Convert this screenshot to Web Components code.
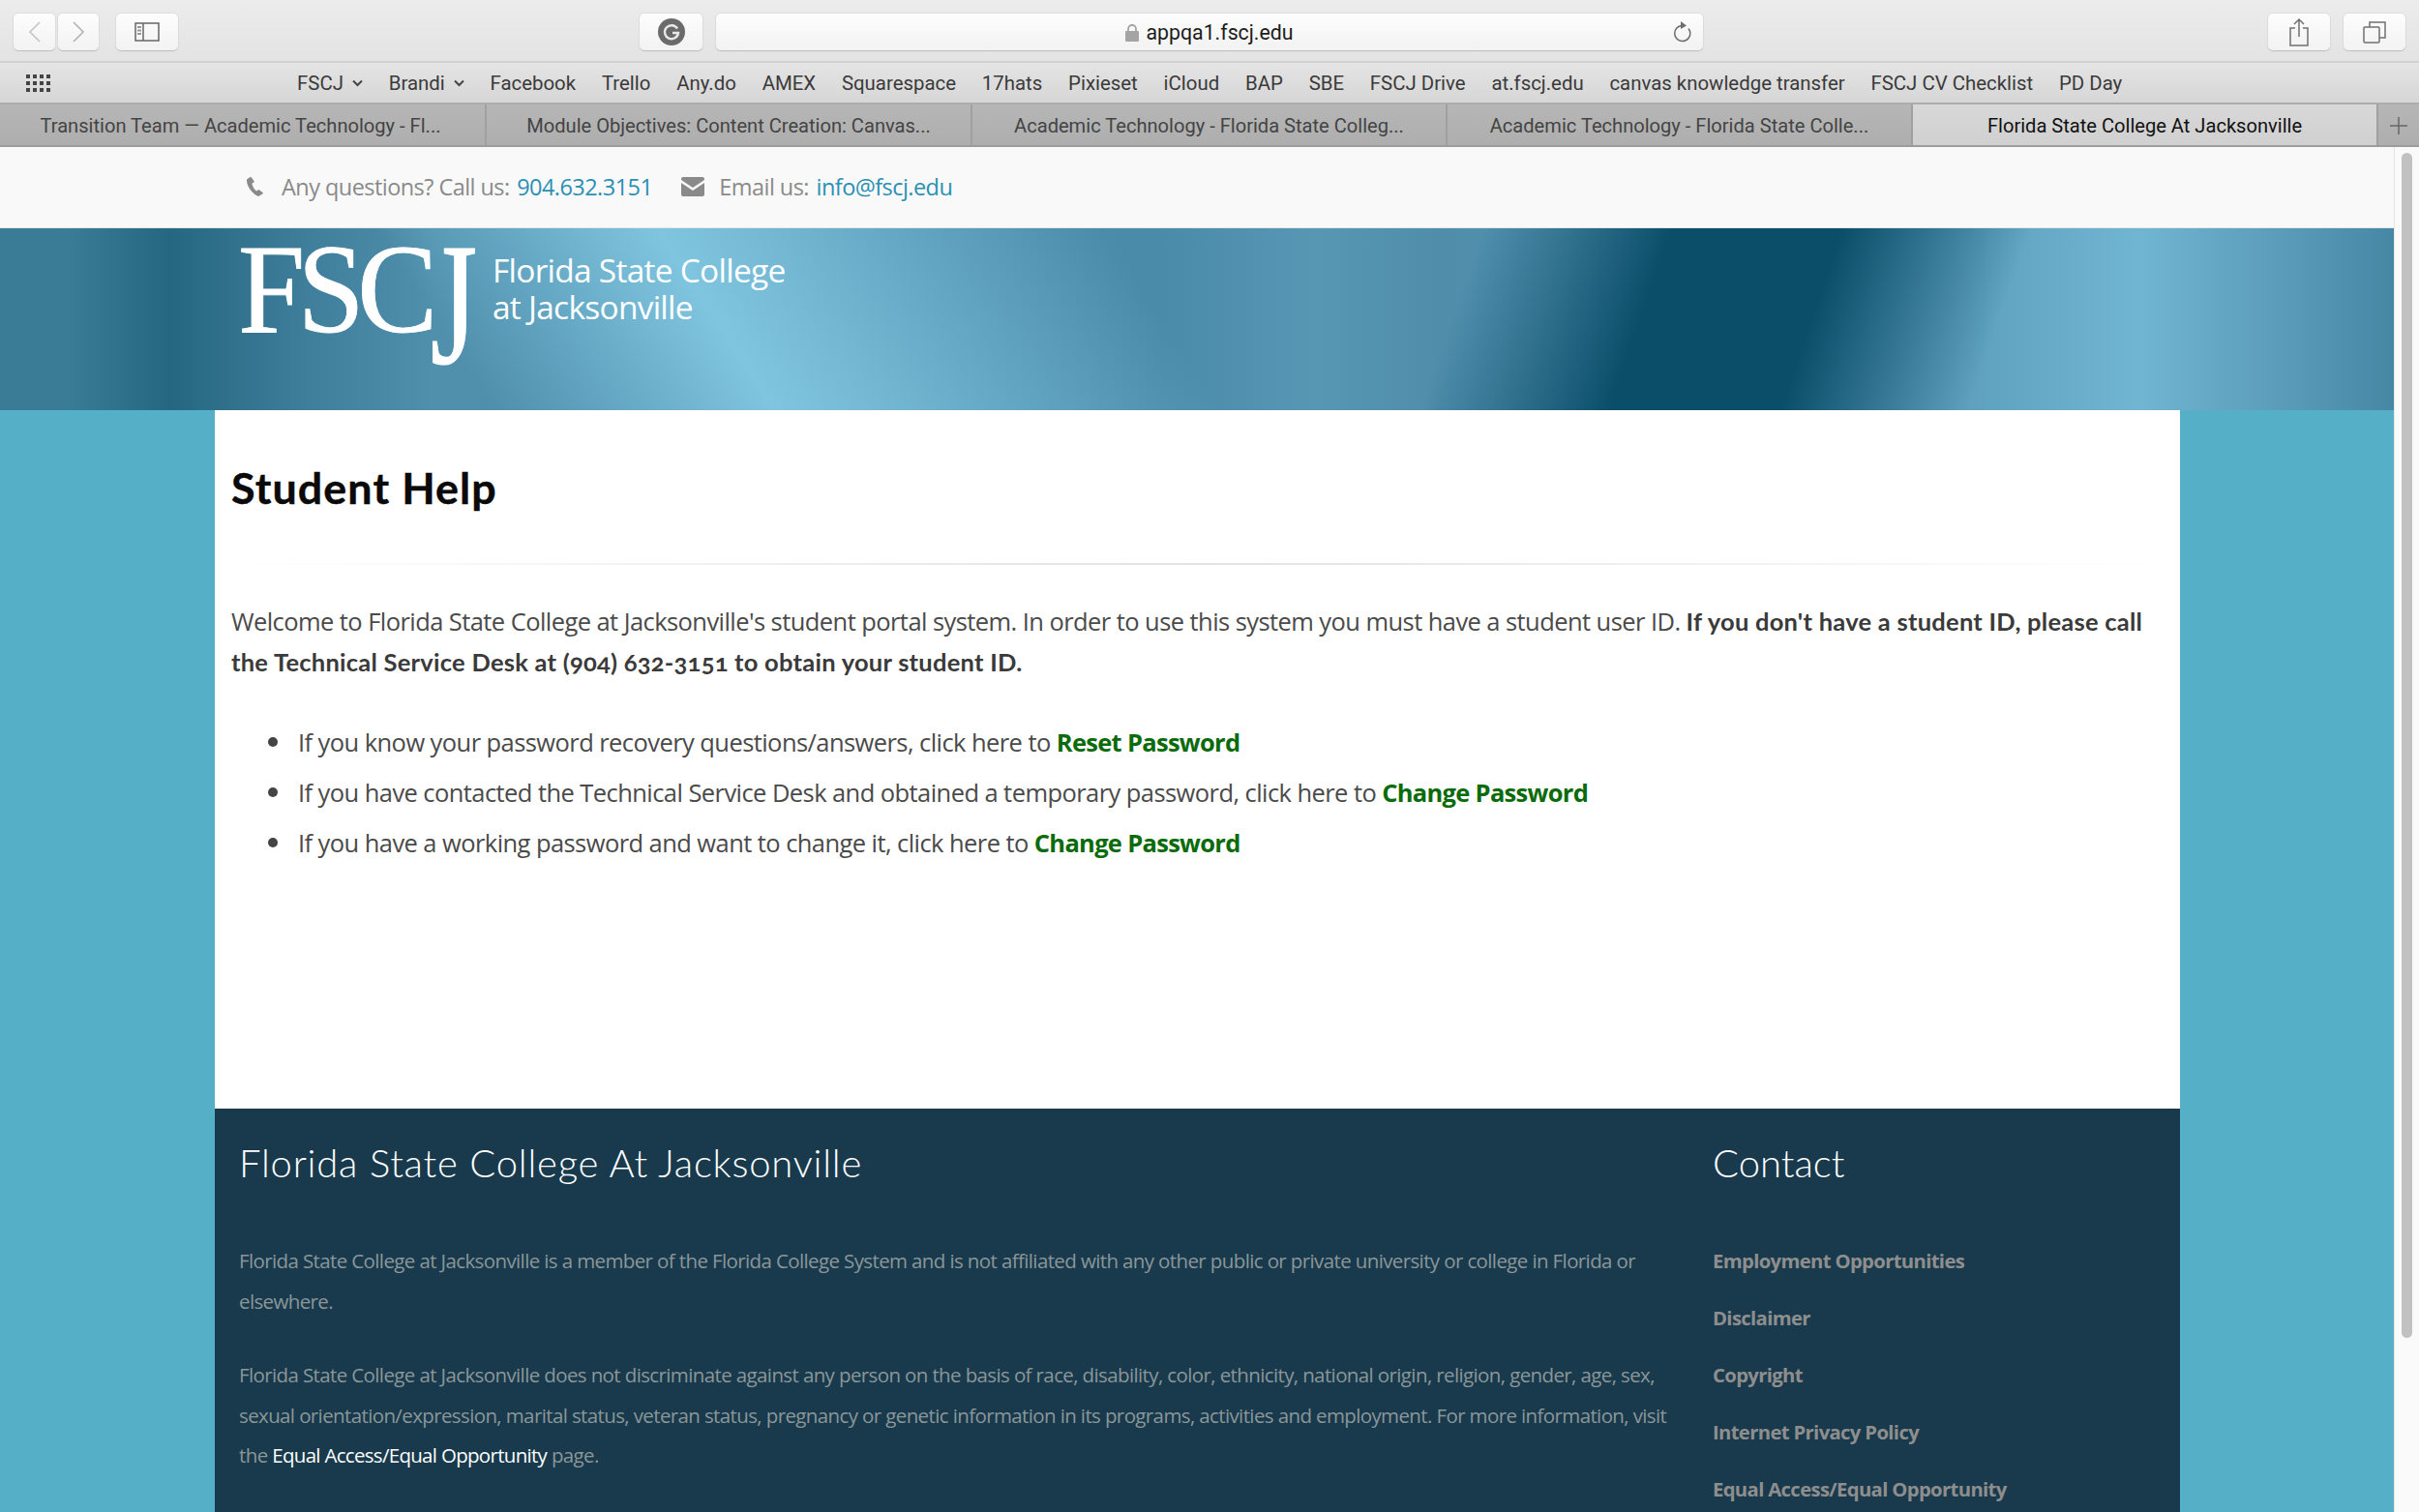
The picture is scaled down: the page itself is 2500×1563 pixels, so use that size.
<!DOCTYPE html>
<html lang="en">
<head>
<meta charset="utf-8">
<title>Student Help</title>
<style>
  html, body { margin: 0; height: 100%; overflow: hidden; background: #fafafa; }
  body { display: flex; flex-direction: column; font-family: "Open Sans", sans-serif; }
  .page { flex: 1; min-height: 0; display: flex; }
  .scroller { flex: 1; min-width: 0; display: flex; flex-direction: column; background: #54afc7; overflow: hidden; }
</style>
</head>
<body>
  <browser-toolbar url="appqa1.fscj.edu"></browser-toolbar>
  <bookmarks-bar></bookmarks-bar>
  <tab-strip></tab-strip>
  <div class="page">
    <div class="scroller">
      <site-topbar></site-topbar>
      <site-banner></site-banner>
      <help-content></help-content>
      <site-footer></site-footer>
    </div>
    <scroll-track></scroll-track>
  </div>

<script>
/**
 * Small base class: each element passes its markup and gets an open shadow root.
 */
class ShadowElement extends HTMLElement {
  constructor(html) {
    super();
    this.attachShadow({ mode: 'open' });
    const template = document.createElement('template');
    template.innerHTML = html;
    this.shadowRoot.appendChild(template.content.cloneNode(true));
  }
}

class BrowserToolbar extends ShadowElement {
  constructor() {
    super(`
      <style>
        :host {
          display: flex;
          align-items: flex-start;
          height: 65px;
          box-sizing: border-box;
          padding-top: 14px;
          background: linear-gradient(#ececec, #e3e3e3);
          border-bottom: 2px solid #d2d2d2;
        }
        .btn {
          height: 38px;
          box-sizing: border-box;
          display: flex;
          align-items: center;
          justify-content: center;
          background: linear-gradient(#fdfdfd, #f2f2f2);
          border-radius: 5px;
          box-shadow: 0 1px 1px #bdbdbd, 0 0 0 1px #dedede;
          flex-shrink: 0;
        }
        svg { display: block; fill: none; stroke: #7a7a7a; stroke-width: 1.5; }
        .url {
          width: 1020px;
          margin-left: 14px;
          position: relative;
          font: 21.300px Roboto, sans-serif;
          color: #1c1c1c;
          gap: 7px;
          padding-top: 1px;
        }
        .reload { position: absolute; right: 12px; top: 6px; }
      </style>
      <div class="btn" style="width:43px;margin-left:14px">
        <svg width="14" height="24" viewBox="0 0 14 24" style="stroke:#c2c2c2"><path d="M12 2 2 12l10 10"/></svg>
      </div>
      <div class="btn" style="width:42px;margin-left:3px">
        <svg width="14" height="24" viewBox="0 0 14 24" style="stroke:#b0b0b0"><path d="M2 2l10 10L2 22"/></svg>
      </div>
      <div class="btn" style="width:64px;margin-left:18px">
        <svg width="26" height="20" viewBox="0 0 26 20"><rect x="1" y="1" width="24" height="18" stroke="#666"/><path d="M9 1v18" stroke="#666"/><path d="M3 5h4M3 8.500h4M3 12h4" stroke="#999" stroke-width="2"/></svg>
      </div>
      <div class="btn" style="width:65px;margin-left:477px">
        <svg width="28" height="28" viewBox="0 0 28 28"><circle cx="14" cy="14" r="14" fill="#6b6b6b" stroke="none"/><path d="M20 10.500A7 7 0 1 0 21 15h-6" stroke="#e8e8e8" stroke-width="2.400"/></svg>
      </div>
      <div class="btn url">
        <svg width="14" height="18" viewBox="0 0 14 18" style="stroke:none"><rect x="0" y="7" width="14" height="11" rx="1" fill="#a4a4a4"/><path d="M3 8V5a4 4 0 0 1 8 0v3" stroke="#a4a4a4" stroke-width="1.800"/></svg>
        <span id="url"></span>
        <svg class="reload" width="22" height="26" viewBox="0 0 22 26"><path d="M13 6.500a8 8 0 1 0 6 3" stroke="#6e6e6e"/><path d="M11 2l6 4.500-6 3.500z" fill="#6e6e6e" stroke="none"/></svg>
      </div>
      <div class="btn" style="width:64px;margin-left:584px">
        <svg width="22" height="30" viewBox="0 0 22 30"><path d="M7 11H2v18h18V11h-5M11 20V2M6 7l5-5 5 5" stroke="#707070"/></svg>
      </div>
      <div class="btn" style="width:64px;margin-left:14px">
        <svg width="24" height="24" viewBox="0 0 24 24"><rect x="1" y="7" width="16" height="16" rx="1" stroke="#707070"/><path d="M7 7V2h16v16h-6" stroke="#707070"/></svg>
      </div>
    `);
  }

  connectedCallback() {
    this.shadowRoot.getElementById('url').textContent = this.getAttribute('url');
  }
}

class BookmarksBar extends ShadowElement {
  constructor() {
    super(`
      <style>
        :host {
          display: flex;
          align-items: center;
          height: 43px;
          box-sizing: border-box;
          padding-top: 1px;
          background: linear-gradient(#e4e4e4, #d6d6d6);
          border-bottom: 2px solid #acacac;
          font: 20.400px Roboto, sans-serif;
          color: #3a3a3a;
          white-space: nowrap;
        }
        .grid { display: block; margin-left: 27px; margin-right: 255px; fill: #444; }
        span { margin-right: 26.800px; display: inline-flex; align-items: center; gap: 9px; }
        span svg { fill: none; stroke: #444; stroke-width: 2; }
      </style>
      <svg class="grid" width="25" height="18" viewBox="0 0 25 18">
        <rect x="0" y="0" width="4" height="4"/><rect x="7" y="0" width="4" height="4"/><rect x="14" y="0" width="4" height="4"/><rect x="21" y="0" width="4" height="4"/>
        <rect x="0" y="7" width="4" height="4"/><rect x="7" y="7" width="4" height="4"/><rect x="14" y="7" width="4" height="4"/><rect x="21" y="7" width="4" height="4"/>
        <rect x="0" y="14" width="4" height="4"/><rect x="7" y="14" width="4" height="4"/><rect x="14" y="14" width="4" height="4"/><rect x="21" y="14" width="4" height="4"/>
      </svg>
      <span>FSCJ <svg width="11" height="8" viewBox="0 0 11 8"><path d="M1 1.500l4.500 4.500L10 1.500"/></svg></span>
      <span>Brandi <svg width="11" height="8" viewBox="0 0 11 8"><path d="M1 1.500l4.500 4.500L10 1.500"/></svg></span>
      <span>Facebook</span><span>Trello</span><span>Any.do</span><span>AMEX</span>
      <span>Squarespace</span><span>17hats</span><span>Pixieset</span><span>iCloud</span>
      <span>BAP</span><span>SBE</span><span>FSCJ Drive</span><span>at.fscj.edu</span>
      <span>canvas knowledge transfer</span><span>FSCJ CV Checklist</span><span>PD Day</span>
    `);
  }
}

class TabStrip extends ShadowElement {
  constructor() {
    super(`
      <style>
        :host {
          display: flex;
          height: 44px;
          box-sizing: border-box;
          background: linear-gradient(#b6b6b6, #aeaeae);
          border-bottom: 2px solid #9c9c9c;
          font: 20.100px Roboto, sans-serif;
          color: #444;
          white-space: nowrap;
        }
        div {
          display: flex;
          align-items: center;
          justify-content: center;
          box-sizing: border-box;
          padding-top: 2px;
          border-right: 2px solid #a0a0a0;
        }
        .active { background: linear-gradient(#d8d8d8, #d0d0d0); color: #111; }
        .plus { flex: 1; border-right: 0; }
        svg { stroke: #666; stroke-width: 1.500; }
      </style>
      <div style="width:503px;padding-right:4px">Transition Team \u2014 Academic Technology - Fl...</div>
      <div style="width:502px">Module Objectives: Content Creation: Canvas...</div>
      <div style="width:491px">Academic Technology - Florida State Colleg...</div>
      <div style="width:481px">Academic Technology - Florida State Colle...</div>
      <div style="width:481px" class="active">Florida State College At Jacksonville</div>
      <div class="plus"><svg width="20" height="20" viewBox="0 0 20 20"><path d="M10 1v18M1 10h18"/></svg></div>
    `);
  }
}

class SiteTopbar extends ShadowElement {
  constructor() {
    super(`
      <style>
        :host {
          display: flex;
          align-items: center;
          height: 84px;
          flex-shrink: 0;
          box-sizing: border-box;
          padding: 0 0 2px 255px;
          background: #f9f9f9;
          border-bottom: 1px solid #e4e4e4;
          font: 23.500px "Open Sans", sans-serif;
          letter-spacing: -.55px;
          color: #8a8a8a;
          white-space: nowrap;
        }
        a { color: #2a90b4; text-decoration: none; }
        svg { fill: #8a8a8a; flex-shrink: 0; }
        .phone { margin-right: 18px; }
        .mail { margin: 0 15px 0 30px; }
        .txt a { margin-left: 2px; }
      </style>
      <svg class="phone" width="18" height="20" viewBox="0 0 18 20"><path d="M3.500 0 0 2.500C-.5 8 4.500 17 12 20l5-3-.5-1-4-3-2.500 1.500C8 13 5.500 9 5.500 6.500L8 5 5 .5z"/></svg>
      <span class="txt">Any questions? Call us: <a>904.632.3151</a></span>
      <svg class="mail" width="24" height="20" viewBox="0 0 24 20"><path d="M2 0h20a2 2 0 0 1 2 2v1L12 11 0 3V2a2 2 0 0 1 2-2zM0 6l12 8 12-8v12a2 2 0 0 1-2 2H2a2 2 0 0 1-2-2z"/></svg>
      <span class="txt">Email us: <a>info@fscj.edu</a></span>
    `);
  }
}

class SiteBanner extends ShadowElement {
  constructor() {
    super(`
      <style>
        :host {
          display: flex;
          height: 188px;
          flex-shrink: 0;
          box-sizing: border-box;
          padding: 0 0 0 246px;
          color: #fff;
          background:
            linear-gradient(57deg, rgba(128,197,224,0) 429px, #80c5e0 672px, rgba(128,197,224,0) 1058px),
            linear-gradient(109deg, rgba(11,78,106,0) 1449px, #0b4e6a 1634px, #0b4e6a 1800px, rgba(11,78,106,0) 1985px),
            linear-gradient(90deg, #3a7b96 0, #3a7b96 70px, #256680 176px, #3f7f9c 320px, #5090ad 450px, #4a8baa 1200px, #5897b4 1360px, #4f8dab 1490px, #5ea0bd 2030px, #70b5d2 2210px, #5d9fbd 2340px, #4687a4 2474px);
        }
        .mark {
          font: 131px/1 "Liberation Serif", serif;
          -webkit-text-stroke: .8px #fff;
          letter-spacing: -8px;
          margin-top: -3px;
          height: 131px;
          transform: scaleX(.95);
          transform-origin: left top;
          white-space: nowrap;
          width: 263px;
        }
        .mark span { display: inline-block; transform: scaleY(1.38); transform-origin: 50% 20%; }
        .name {
          font: 33.500px/38px "Open Sans", sans-serif;
          letter-spacing: -.75px;
          margin-top: 24px;
          white-space: nowrap;
        }
      </style>
      <div class="mark">FSC<span>J</span></div>
      <div class="name">Florida State College<br>at Jacksonville</div>
    `);
  }
}

class HelpContent extends ShadowElement {
  constructor() {
    super(`
      <style>
        :host {
          display: block;
          width: 2031px;
          height: 722px;
          flex-shrink: 0;
          box-sizing: border-box;
          margin-left: 222px;
          padding: 50px 17px 0;
          background: #fff;
          font: 25.500px/42px "Open Sans", sans-serif;
          letter-spacing: -.57px;
          color: #4a4a4a;
        }
        h1 {
          margin: 0;
          font: 700 44.800px/60px Lato, sans-serif;
          -webkit-text-stroke: .4px #0a0a0a;
          letter-spacing: 1.1px;
          color: #0a0a0a;
        }
        hr {
          height: 2px;
          border: 0;
          margin: 48px 0 37px;
          background: linear-gradient(90deg, transparent, #e2e2e2 50%, transparent);
        }
        p { margin: 0; }
        b { font: 700 25.500px/42px Lato, sans-serif; letter-spacing: .25px; color: #3a3a3a; font-variant-numeric: oldstyle-nums; }
        ul { list-style: none; margin: 41px 0 0; padding: 0 0 0 38px; }
        li { display: flex; margin-bottom: 10.100px; }
        li::before {
          content: "";
          flex-shrink: 0;
          width: 10px;
          height: 10px;
          margin: 16px 21px 0 0;
          border-radius: 50%;
          background: #444;
        }
        a { color: #0b6b0b; font-weight: 700; letter-spacing: -.7px; text-decoration: none; }
      </style>
      <h1>Student Help</h1>
      <hr>
      <p>Welcome to Florida State College at Jacksonville's student portal system. In order to use this system you must have a student user ID. <b>If you don't have a student ID, please call the Technical Service Desk at (904) 632-3151 to obtain your student ID.</b></p>
      <ul>
        <li><span>If you know your password recovery questions/answers, click here to <a>Reset Password</a></span></li>
        <li><span>If you have contacted the Technical Service Desk and obtained a temporary password, click here to <a>Change Password</a></span></li>
        <li><span>If you have a working password and want to change it, click here to <a>Change Password</a></span></li>
      </ul>
    `);
  }
}

class SiteFooter extends ShadowElement {
  constructor() {
    super(`
      <style>
        :host {
          display: grid;
          grid-template-columns: 1523px 1fr;
          width: 2031px;
          flex: 1;
          box-sizing: border-box;
          margin-left: 222px;
          padding: 26px 26px 0 25px;
          background: #183a4c;
          font: 20.500px/41.600px "Open Sans", sans-serif;
          letter-spacing: -.62px;
          color: #8b9699;
        }
        h2 {
          margin: 0 0 51px;
          font: 300 40px/60px Lato, sans-serif;
          letter-spacing: 0;
          color: #fff;
        }
        h2.wide { letter-spacing: .78px; }
        p { margin: 0 0 35px; max-width: 1485px; }
        p a { color: #fff; letter-spacing: -.7px; }
        ul { list-style: none; margin: 0; padding: 0; }
        li { margin-bottom: 17.400px; font-size: 20.300px; letter-spacing: -.66px; font-weight: 700; color: #8e8e8e; }
      </style>
      <div>
        <h2 class="wide">Florida State College At Jacksonville</h2>
        <p>Florida State College at Jacksonville is a member of the Florida College System and is not affiliated with any other public or private university or college in Florida or elsewhere.</p>
        <p>Florida State College at Jacksonville does not discriminate against any person on the basis of race, disability, color, ethnicity, national origin, religion, gender, age, sex, sexual orientation/expression, marital status, veteran status, pregnancy or genetic information in its programs, activities and employment. For more information, visit the <a>Equal Access/Equal Opportunity</a> page.</p>
      </div>
      <div>
        <h2>Contact</h2>
        <ul>
          <li>Employment Opportunities</li>
          <li>Disclaimer</li>
          <li>Copyright</li>
          <li>Internet Privacy Policy</li>
          <li>Equal Access/Equal Opportunity</li>
        </ul>
      </div>
    `);
  }
}

class ScrollTrack extends ShadowElement {
  constructor() {
    super(`
      <style>
        :host {
          display: block;
          width: 26px;
          flex-shrink: 0;
          box-sizing: border-box;
          padding: 6px 7px 0 7px;
          background: #fafafa;
          border-left: 1px solid #e6e6e6;
        }
        div { height: 1225px; border-radius: 6px; background: #c1c1c1; }
      </style>
      <div></div>
    `);
  }
}

customElements.define('browser-toolbar', BrowserToolbar);
customElements.define('bookmarks-bar', BookmarksBar);
customElements.define('tab-strip', TabStrip);
customElements.define('site-topbar', SiteTopbar);
customElements.define('site-banner', SiteBanner);
customElements.define('help-content', HelpContent);
customElements.define('site-footer', SiteFooter);
customElements.define('scroll-track', ScrollTrack);
</script>
</body>
</html>
